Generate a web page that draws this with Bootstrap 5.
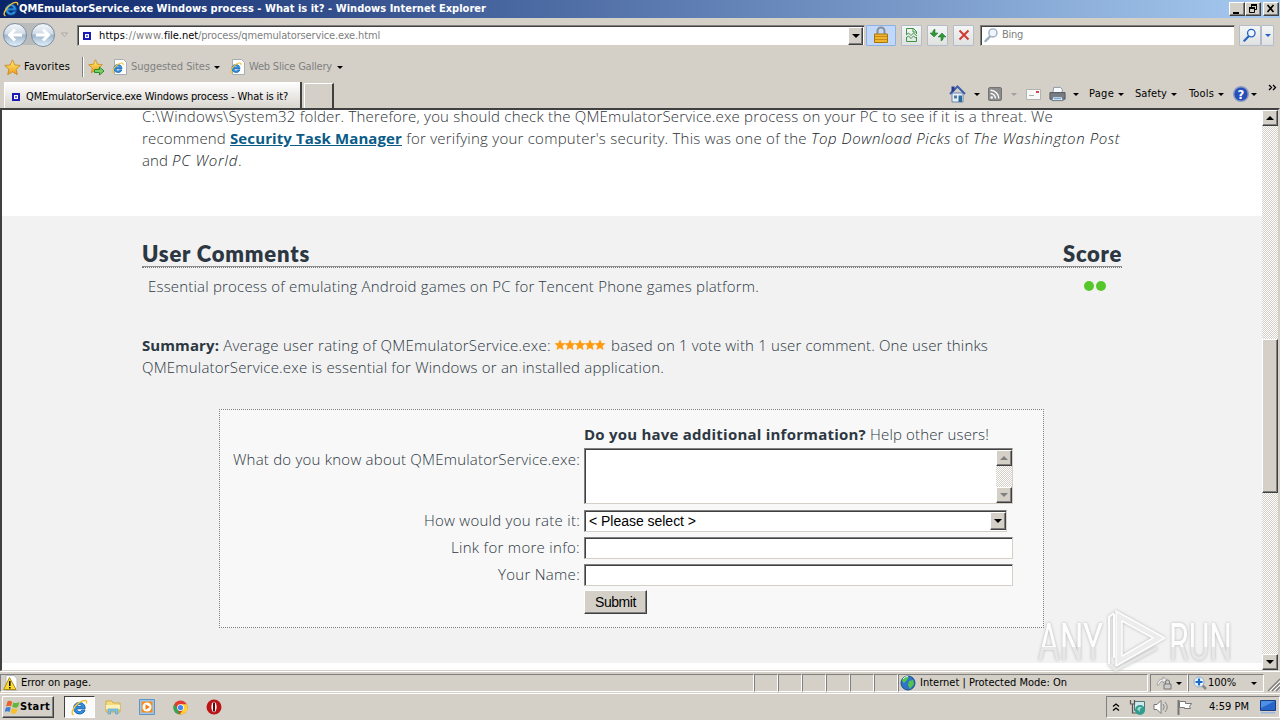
<!DOCTYPE html>
<html lang="en">

<head>
  <meta charset="UTF-8" />
  <meta name="viewport" content="width=device-width, initial-scale=1.0" />
  <title>QMEmulatorService.exe Windows process - What is it?</title>
  <link href="https://cdn.jsdelivr.net/npm/bootstrap@5.3.0/dist/css/bootstrap.min.css" rel="stylesheet" />
  <script src="https://cdn.jsdelivr.net/npm/bootstrap@5.3.0/dist/js/bootstrap.bundle.min.js"></script>
  <style>
    body {
      width: 1280px;
      height: 720px;
      overflow: hidden;
      background: #d4d0c8;
      color: #000;
      font: 11px/14px "DejaVu Sans Condensed", "Noto Sans", sans-serif;
    }

    svg {
      display: block;
      flex: none;
    }

    [data-w] {
      display: inline-block;
      white-space: pre;
      flex: none;
    }

    .dim { color: #808080; }

    /* small black menu arrow */
    .arr {
      flex: none;
      border: 3px solid transparent;
      border-top-color: #000;
      border-bottom: 0;
      width: 0;
      height: 0;
    }

    .arr.off { border-top-color: #a0a0a0; }
    .arr.up { transform: rotate(180deg); }
    .arr.big { border-width: 4px 4px 0; }

    .raised {
      background: #d4d0c8;
      border: 1px solid;
      border-color: #fff #404040 #404040 #fff;
      box-shadow: inset -1px -1px #808080;
    }

    .sunken {
      background: #fff;
      border: 1px solid;
      border-color: #808080 #d4d0c8 #d4d0c8 #808080;
      box-shadow: inset 1px 1px #404040;
    }

    /* title bar */
    .titlebar {
      height: 18px;
      background: linear-gradient(90deg, #0a246a, #a6caf0);
      color: #fff;
      font-weight: bold;
      padding: 0 1px 0 3px;
    }

    .winbtn {
      width: 16px;
      height: 14px;
    }

    /* address row */
    .addressrow {
      height: 33px;
      padding: 1px 0 0 2px;
    }

    .urlbox {
      width: 788px;
      height: 21px;
      margin-left: 8px;
      padding: 2px 1px 1px 5px;
    }

    .iebtn {
      height: 21px;
      border: 1px solid #b4bccb;
      background: linear-gradient(#f4f5f5, #e0e1e1);
      border-radius: 1px;
    }

    .lockbtn {
      background: #c1d8fb;
      border-color: #8db0e7;
    }

    .searchbox {
      width: 255px;
      height: 21px;
      margin-left: 7px;
      padding-left: 3px;
    }

    .favrow {
      height: 30px;
      padding: 2px 0 0 4px;
    }

    .favrow .split {
      width: 2px;
      height: 20px;
      border-left: 1px solid #808080;
      border-right: 1px solid #fff;
      margin: 0 4px 0 12px;
    }

    .tabrow { height: 27px; }

    .pagetab {
      width: 298px;
      height: 26px;
      margin-left: 4px;
      padding: 3px 0 0 7px;
      background: linear-gradient(#fff, #d8d5ce);
      border-right: 2px solid #404040;
      border-left: 1px solid #fff;
    }

    .newtab {
      width: 30px;
      height: 25px;
      margin-left: 2px;
      border: 1px solid #fff;
      border-right: 2px solid #404040;
      border-bottom: 0;
    }

    .tools { width: 331px; height: 26px; }

    /* page viewport */
    .viewport {
      height: 563px;
      border: 2px solid #404040;
      border-bottom: 1px solid #d4d0c8;
      border-right-color: #d4d0c8;
      box-shadow: 0 1px #fff;
      background: #fff;
    }

    .webpage {
      font: 300 15px/22px "Open Sans", "Noto Sans", sans-serif;
      color: #2c3742;
      overflow: hidden;
    }

    .webpage b { font-weight: 700; }
    .intro { height: 106px; padding-left: 140px; color: #2f3337; overflow: hidden; }
    .intro .lines { margin-top: -5px; }
    .intro i { color: #14181c; }
    .intro a { color: #0a5c87; font-weight: 700; }

    .comments {
      height: 447px;
      background: #f2f2f2;
      padding: 25px 140px 0;
    }

    .heads {
      height: 27px;
      font: 800 22px/26px Lato, sans-serif;
      border-bottom: 1px dotted #777;
      box-shadow: inset 0 -1px #8f8f8f;
    }

    .infobox {
      width: 825px;
      height: 219px;
      margin: 31px 0 0 77px;
      padding-top: 13px;
      border: 1px dotted #808080;
      background: #f8f8f8;
    }

    .frow { display: grid; grid-template-columns: 360px 429px; column-gap: 4px; align-items: start; }
    .frow > :first-child { justify-self: end; }
    .frow.slim { line-height: 20px; }
    .rate { width: 423px; height: 22px; font: 14px/16px "Liberation Sans", sans-serif; color: #000; }
    .submit { width: 63px; height: 24px; font: 14px/16px "Liberation Sans", sans-serif; color: #000; padding: 0; border-radius: 0; }

    .track {
      width: 16px;
      background: repeating-conic-gradient(#d4d0c8 0 25%, #fff 0 50%) 0 0 / 2px 2px;
    }

    .sbtn { width: 16px; height: 16px; }
    .thumb { height: 154px; margin-top: 213px; }

    .watermark {
      position: absolute;
      left: 1031px;
      top: 602px;
      opacity: .85;
      overflow: visible;
      filter: drop-shadow(0 0 1.5px #aaa);
    }

    /* status bar and taskbar */
    .status {
      height: 19px;
      margin-top: 3px;
    }

    .pane {
      height: 18px;
      border: 1px solid;
      border-color: #808080 #fff #fff #808080;
      flex: none;
    }

    .taskbar {
      height: 27px;
      border-top: 1px solid #fff;
      padding: 2px 0 2px 2px;
    }

    .start { width: 52px; height: 22px; font-weight: bold; padding-left: 2px; }
    .active-task { width: 31px; height: 22px; margin-left: 10px; border: 1px solid; border-color: #404040 #fff #fff #404040; background: #fafafa; }
    .tray { width: 174px; height: 22px; border: 1px solid; border-color: #808080 #fff #fff #808080; }
  </style>
</head>

<body>
  <svg width="0" height="0" class="position-absolute">
    <defs>
      <linearGradient id="orb" x2="0" y2="1">
        <stop offset="0" stop-color="#f6f9fc" />
        <stop offset=".45" stop-color="#cfdae6" />
        <stop offset=".5" stop-color="#9fb5cc" />
        <stop offset="1" stop-color="#e2f2fb" />
      </linearGradient>
      <linearGradient id="gold" x2="0" y2="1">
        <stop offset="0" stop-color="#fff27a" />
        <stop offset="1" stop-color="#f09a16" />
      </linearGradient>
      <linearGradient id="wm" x2="0" y2="1">
        <stop offset=".58" stop-color="#fff" />
        <stop offset=".58" stop-color="#e6e6e6" />
      </linearGradient>
      <symbol id="ie" viewBox="0 0 16 16">
        <path d="M13.300 9.200H5.400c.2 3 3.700 3.600 4.800 1.300h3C11.500 16 2.500 15 2.500 8.600 2.500 1.500 13.700 1.300 13.300 9.200zM5.500 7.200h4.700C10 4.600 5.900 4.600 5.500 7.200z" fill="#2f92df" stroke="#1560ad" stroke-width=".9" />
        <path d="M2.600 14.600C-.5 15 1.300 8 7.300 3.700 11.500.7 15.900.3 14.500 4.300" fill="none" stroke="#f0c33a" stroke-width="1.400" />
      </symbol>
      <symbol id="iepage" viewBox="0 0 16 16">
        <path d="M2.500.5h9l3 3v12h-12z" fill="#fff" stroke="#a8adb5" />
        <use href="#ie" x="0" y="3" width="12" height="12" />
      </symbol>
      <symbol id="star" viewBox="0 0 16 16">
        <path d="M8 .8l2.100 4.800 5.200.5-3.900 3.500 1.100 5.100L8 12.100l-4.500 2.600 1.100-5.100L.7 6.100l5.200-.5z" fill="url(#gold)" stroke="#c8841a" stroke-width=".8" />
      </symbol>
      <symbol id="sq" viewBox="0 0 8 8">
        <path d="M0 0h8v8H0z" fill="#1a1ab4" />
        <path d="M2 2h4v4H2z" fill="#fff" />
        <path d="M3 3h2v2H3z" fill="#6b6be0" />
      </symbol>
      <symbol id="lens" viewBox="0 0 16 16">
        <path d="M6.500 9.500L1.500 14.500" stroke="currentColor" stroke-width="2.400" stroke-linecap="round" />
        <circle cx="9.500" cy="5.800" r="4.300" fill="#eef5fd" stroke="currentColor" stroke-width="1.500" />
      </symbol>
    </defs>
  </svg>

  <div class="titlebar d-flex align-items-center">
    <svg width="16" height="16"><use href="#ie" /></svg>
    <span data-w="467">QMEmulatorService.exe Windows process - What is it? - Windows Internet Explorer</span>
    <div class="d-flex ms-auto">
      <div class="winbtn raised"><svg width="14" height="12"><path d="M3 9h6v2H3z" /></svg></div>
      <div class="winbtn raised"><svg width="14" height="12"><path d="M5 1h6v2H5zM3 4h6v2H3z" /><path d="M5.500 4V1.500h5v5H9M3.500 5h5v4.500h-5z" fill="none" stroke="#000" /></svg></div>
      <div class="winbtn raised" style="margin-left:2px"><svg width="14" height="12"><path d="M3.500 2l6 7M9.500 2l-6 7" stroke="#000" stroke-width="1.700" /></svg></div>
    </div>
  </div>

  <div class="addressrow d-flex align-items-center">
    <svg width="54" height="28" viewBox="0 0 54 28">
      <rect x="1" y="2" width="52" height="22" rx="11" fill="#a9adb3" opacity=".6" />
      <circle cx="13" cy="14" r="11.500" fill="url(#orb)" stroke="#7c8da0" />
      <circle cx="41" cy="14" r="11.500" fill="url(#orb)" stroke="#7c8da0" />
      <path d="M20 14H8M13 8.500L7.500 14l5.500 5.500M34 14h12M41 8.500l5.500 5.500-5.500 5.500" fill="none" stroke="#fff" stroke-width="3" />
    </svg>
    <svg class="ms-1" width="9" height="6"><path d="M1.500 1h6L4.500 4.500z" fill="#dedbd5" stroke="#aaa69f" /></svg>
    <div class="urlbox sunken d-flex align-items-center">
      <svg width="8" height="8"><use href="#sq" /></svg>
      <span class="dim ps-2 d-flex"><span class="text-black" data-w="26">https</span><span data-w="39">://www.</span><span class="text-black" data-w="34">file.net</span><span data-w="182">/process/qmemulatorservice.exe.html</span></span>
      <div class="raised ms-auto d-flex align-items-center justify-content-center" style="width:15px;height:18px"><span class="arr big"></span></div>
    </div>
    <div class="iebtn lockbtn d-flex align-items-center justify-content-center" style="width:30px;margin-left:1px">
      <svg width="16" height="18" viewBox="0 0 16 18">
        <path d="M4.500 8V5a3.500 3.500 0 0 1 7 0v3" fill="none" stroke="#8a8d92" stroke-width="2" />
        <path d="M1.500 8h13v8.500h-13z" fill="#f0b52c" stroke="#a87412" />
        <path d="M2 10.500h12M2 13.500h12" stroke="#c28a18" />
      </svg>
    </div>
    <div class="iebtn d-flex align-items-center justify-content-center" style="width:21px;margin-left:5px">
      <svg width="14" height="16" viewBox="0 0 14 16"><path d="M1.500 7V1.500h7l3 3V7M1.500 10v4.500h10V10M8 1.500V5h3.500M1 8l2.500-2L6 8.500 8.500 6 12 9M1 11l2.500-2L6 11.500 8.500 9l3.500 3" fill="none" stroke="#3b9542" /></svg>
    </div>
    <div class="iebtn d-flex align-items-center justify-content-center" style="width:21px;margin-left:5px">
      <svg width="16" height="14" viewBox="0 0 16 14"><path d="M5 1v4h3L4 9 0 5h2.500Q2.500 2 5 1zM11 13V9H8l4-4 4 4h-2.500q0 3-2.500 4z" fill="#2e9937" stroke="#1c7024" stroke-width=".5" /></svg>
    </div>
    <div class="iebtn d-flex align-items-center justify-content-center" style="width:21px;margin-left:5px">
      <svg width="12" height="12"><path d="M1.500 1.500l9 9M10.500 1.500l-9 9" stroke="#d03b34" stroke-width="2" /></svg>
    </div>
    <div class="searchbox sunken d-flex align-items-center" style="margin-left:6px">
      <svg width="15" height="16" style="color:#9aaec2"><use href="#lens" /></svg>
      <span class="dim" style="margin-left:3px" data-w="21">Bing</span>
    </div>
    <div class="iebtn d-flex align-items-center justify-content-center" style="width:22px;margin-left:4px;color:#2462c5">
      <svg width="14" height="14"><use href="#lens" /></svg>
    </div>
    <div class="iebtn d-flex align-items-center justify-content-center" style="width:13px"><span class="arr" style="border-top-color:#2462c5"></span></div>
  </div>

  <div class="favrow d-flex align-items-center">
    <svg width="17" height="17"><use href="#star" /></svg>
    <span style="margin-left:3px" data-w="46">Favorites</span>
    <span class="split"></span>
    <svg width="17" height="17" viewBox="0 0 17 17"><use href="#star" width="15" height="15" /><path d="M6.500 10.500h5V8l4.500 4-4.500 4v-2.500h-5z" fill="#7ad064" stroke="#268b2a" /></svg>
    <svg width="16" height="16" style="margin-left:7px"><use href="#iepage" /></svg>
    <span class="dim" style="margin-left:3px" data-w="79">Suggested Sites</span>
    <span class="arr" style="margin-left:4px"></span>
    <svg width="16" height="16" style="margin-left:10px"><use href="#iepage" /></svg>
    <span class="dim" style="margin-left:3px" data-w="83">Web Slice Gallery</span>
    <span class="arr" style="margin-left:5px"></span>
  </div>

  <div class="tabrow d-flex align-items-end">
    <div class="pagetab d-flex align-items-center">
      <svg width="8" height="8"><use href="#sq" /></svg>
      <span style="margin-left:6px" data-w="262">QMEmulatorService.exe Windows process - What is it?</span>
    </div>
    <div class="newtab"></div>
    <div class="tools d-flex align-items-center ms-auto align-self-start">
      <svg width="17" height="18" viewBox="0 0 17 18"><path d="M3 8h11v9H3z" fill="#e9f0fb" stroke="#6d83a9" /><path d="M1 9l7.500-7.500L16 9" fill="none" stroke="#3d60ad" stroke-width="2" /><path d="M2.500 1.500h3v4l-3 2z" fill="#273a8d" /><path d="M9.500 10.500h3.500V17H9.500z" fill="#286f9c" /><path d="M5 10.500h3v3H5z" fill="#53799f" /></svg>
      <span class="arr" style="margin-left:8px"></span>
      <svg style="margin-left:8px" width="14" height="14"><rect x=".5" y=".5" width="13" height="13" rx="1.500" fill="#8d8d8d" stroke="#747474" /><circle cx="3.700" cy="10.500" r="1.300" fill="#fff" /><path d="M2.500 6.500a5 5 0 0 1 5 5M2.500 3.200a8.300 8.300 0 0 1 8.300 8.300" fill="none" stroke="#fff" stroke-width="1.400" /></svg>
      <span class="arr off" style="margin-left:9px"></span>
      <svg style="margin-left:9px" width="15" height="11"><path d="M.5.500h14v10H.5z" fill="#f9f9f9" stroke="#b2b2b2" /><path d="M10 2h3v2h-3z" fill="#d24452" /><path d="M3 6.500h5" stroke="#aaa" /></svg>
      <svg style="margin-left:8px" width="17" height="16" viewBox="0 0 18 16"><path d="M5 1h7l2 2v4H4z" fill="#f8fbff" stroke="#8794a4" /><path d="M1 6.500h16v7H1z" fill="#777c83" stroke="#50555b" /><path d="M4 11h10l1 4H3z" fill="#eef4fb" stroke="#65717f" /><path d="M5 13h8" stroke="#4d8fd1" /></svg>
      <span class="arr" style="margin-left:7px"></span>
      <span style="margin-left:10px" data-w="25">Page</span><span class="arr" style="margin-left:4px"></span>
      <span style="margin-left:11px" data-w="32">Safety</span><span class="arr" style="margin-left:4px"></span>
      <span style="margin-left:12px" data-w="25">Tools</span><span class="arr" style="margin-left:4px"></span>
      <svg style="margin-left:9px" width="16" height="16"><circle cx="8" cy="8" r="7.300" fill="#2650b8" stroke="#8a9ac0" stroke-width="1.400" /><text x="8" y="12.500" text-anchor="middle" font-size="13" font-weight="bold" fill="#fff">?</text></svg>
      <span class="arr" style="margin-left:2px"></span>
      <svg class="align-self-start" style="margin-left:11px" width="9" height="12"><path d="M1 4l2.500 2.500L1 9M5 4l2.500 2.500L5 9" fill="none" stroke="#000" stroke-width="1.300" /></svg>
    </div>
  </div>

  <div class="viewport d-flex">
    <div class="webpage flex-grow-1">
      <div class="intro">
        <div class="lines">
          <div><span data-w="911">C:\Windows\System32 folder. Therefore, you should check the QMEmulatorService.exe process on your PC to see if it is a threat. We</span></div>
          <div class="d-flex"><span data-w="88">recommend </span><a href="#" data-w="172">Security Task Manager</a><span data-w="409"> for verifying your computer's security. This was one of the </span><i data-w="140">Top Download Picks</i><span data-w="22"> of </span><i data-w="147">The Washington Post</i></div>
          <div class="d-flex"><span data-w="30">and </span><i data-w="66">PC World</i><span>.</span></div>
        </div>
      </div>
      <div class="comments">
        <div class="heads d-flex justify-content-between"><span data-w="168">User Comments</span><span data-w="59">Score</span></div>
        <div class="d-flex align-items-center" style="padding:7px 16px 0 6px">
          <span data-w="611">Essential process of emulating Android games on PC for Tencent Phone games platform.</span>
          <svg class="ms-auto" width="22" height="10"><circle cx="5" cy="5" r="5" fill="#56c72b" /><circle cx="17" cy="5" r="5" fill="#56c72b" /></svg>
        </div>
        <div style="padding-top:37px">
          <div class="d-flex align-items-center"><b data-w="77">Summary:</b><span data-w="336"> Average user rating of QMEmulatorService.exe: </span><svg width="50" height="10" id="stars"></svg><span style="margin-left:2px" data-w="381"> based on 1 vote with 1 user comment. One user thinks</span></div>
          <div><span data-w="522">QMEmulatorService.exe is essential for Windows or an installed application.</span></div>
        </div>
        <div class="infobox">
          <div class="frow"><span></span><div class="d-flex"><b data-w="282">Do you have additional information?</b><span data-w="123"> Help other users!</span></div></div>
          <div class="frow" style="margin-top:3px">
            <span data-w="347">What do you know about QMEmulatorService.exe:</span>
            <div class="sunken d-flex" style="height:56px">
              <div class="track ms-auto d-flex flex-column justify-content-between" style="margin-top:1px">
                <div class="sbtn raised d-flex align-items-center justify-content-center"><span class="arr big up" style="border-top-color:#808080"></span></div>
                <div class="sbtn raised d-flex align-items-center justify-content-center"><span class="arr big" style="border-top-color:#808080"></span></div>
              </div>
            </div>
          </div>
          <div class="frow slim" style="margin-top:6px">
            <span data-w="156">How would you rate it:</span>
            <div class="rate sunken d-flex align-items-center ps-1"><span data-w="107">&lt; Please select &gt;</span><div class="raised ms-auto d-flex align-items-center justify-content-center" style="width:16px;height:18px"><span class="arr big"></span></div></div>
          </div>
          <div class="frow slim" style="margin-top:5px"><span data-w="129">Link for more info:</span><div class="sunken" style="height:22px"></div></div>
          <div class="frow slim" style="margin-top:5px"><span data-w="82">Your Name:</span><div class="sunken" style="height:22px"></div></div>
          <div class="frow" style="margin-top:4px"><span></span><button class="submit raised"><span data-w="41">Submit</span></button></div>
        </div>
      </div>
    </div>
    <div class="track d-flex flex-column">
      <div class="sbtn raised d-flex align-items-center justify-content-center"><span class="arr big up"></span></div>
      <div class="thumb raised"></div>
      <div class="sbtn raised d-flex align-items-center justify-content-center mt-auto"><span class="arr big"></span></div>
    </div>
  </div>

  <div class="status d-flex">
    <div class="pane d-flex align-items-center" style="width:754px;padding-left:2px">
      <svg width="15" height="16" viewBox="0 0 15 16"><path d="M3 .5h8l3 3v12H3z" fill="#fff" stroke="#bbb" /><path d="M6.500 2.500L13 14.500H.7z" fill="#fbdc2c" stroke="#ab8a14" stroke-linejoin="round" /><path d="M6.800 6v5M6.800 12v1.500" stroke="#000" stroke-width="1.500" /></svg>
      <span style="margin-left:3px" data-w="70">Error on page.</span>
    </div>
    <div class="d-flex" id="panes"></div>
    <div class="pane d-flex align-items-center" style="width:250px;padding-left:1px">
      <svg width="16" height="16"><circle cx="8" cy="8" r="7" fill="#2c75c7" stroke="#1e4a8a" /><path d="M3 3q4-3 6-1L7 5 4 8 2 6zM9 6l4-1 1 4-4 5-2-4z" fill="#55c34c" /><path d="M3 4q2-3 5-2.500" fill="none" stroke="#d9f5ff" /></svg>
      <span style="margin-left:4px" data-w="147">Internet | Protected Mode: On</span>
    </div>
    <div class="pane d-flex align-items-center" style="width:38px;padding-left:5px;margin-left:2px">
      <svg width="16" height="14" viewBox="0 0 16 14"><path d="M1 9Q2 3 7 3V1l4 3-4 3V5Q4 5 3 9z" fill="#eee" stroke="#999" stroke-width=".8" /><path d="M9.500 8V6a2 2 0 0 1 4 0v2M8 8h7v5H8z" fill="#ccc" stroke="#777" /></svg>
      <span class="arr" style="margin-left:4px"></span>
    </div>
    <div class="pane d-flex align-items-center" style="width:76px;padding-left:4px">
      <svg width="15" height="15"><path d="M9 9l4 4" stroke="#888" stroke-width="2.500" /><circle cx="6" cy="6" r="5" fill="#eef6ff" stroke="#91aecb" /><path d="M6 2.500v7M2.500 6h7" stroke="#1c6bc7" stroke-width="2.200" /></svg>
      <span data-w="28">100%</span>
      <span class="arr" style="margin-left:15px"></span>
    </div>
    <svg class="ms-auto" width="12" height="18"><path d="M0 17L12 5M4 17l8-8M8 17l4-4" stroke="#808080" stroke-width="1.500" /><path d="M2 17L12 7M6 17l6-6" stroke="#fff" /></svg>
  </div>

  <div class="taskbar d-flex align-items-center">
    <div class="start raised d-flex align-items-center">
      <svg width="15" height="16" viewBox="0 0 15 16"><path d="M2.500 2.500Q5 1 7.200 3L6 7.500Q4 6 1 7.500z" fill="#e9612b" /><path d="M8.300 3.400Q11 5 14.500 3L13 8Q10 9.500 7.200 7.800z" fill="#65b53b" /><path d="M.8 8.800Q4 7.300 5.700 8.800L4.500 13Q2.500 11.500-.3 13z" fill="#3e7dda" /><path d="M6.900 9.100Q9.500 11 12.600 9.300L11.300 14Q8 15.500 5.600 13.400z" fill="#f7c028" /></svg>
      <span data-w="30">Start</span>
    </div>
    <div class="active-task d-flex align-items-center justify-content-center"><svg width="17" height="17"><use href="#ie" /></svg></div>
    <svg style="margin-left:9px" width="18" height="18" viewBox="0 0 18 18"><path d="M2 3h6l1 2h7v9H2z" fill="#f4dc82" stroke="#d3ac45" /><path d="M2 7h14v4H2z" fill="#fbf0b7" /><path d="M4 16v-5h10v5h-2.500v-3h-5v3z" fill="#7ec5e8" stroke="#5fa1c8" stroke-width=".7" /></svg>
    <svg style="margin-left:17px" width="16" height="16"><path d="M.5.500h15v15H.5z" fill="#9fc5e8" stroke="#5e94c8" /><path d="M2.500 2.500h11v11h-11z" fill="#f48c1f" /><circle cx="8" cy="8" r="4.500" fill="#fff" /><path d="M6.500 5.300v5.400L10.800 8z" fill="#ef7d12" /></svg>
    <svg style="margin-left:18px" width="15" height="15" viewBox="0 0 16 16"><circle cx="8" cy="8" r="7.500" fill="#e33b2e" /><path d="M1.500 4.300L6 12l1 3.500A7.500 7.500 0 0 1 1.500 4.300z" fill="#2da94f" /><path d="M8 4.500h6.700Q17.500 11 12 14.300q-2 1.200-5 1.100L11 10z" fill="#fdd232" /><circle cx="8" cy="8" r="3.600" fill="#fff" /><circle cx="8" cy="8" r="2.800" fill="#4086f4" /></svg>
    <svg style="margin-left:18px" width="16" height="16"><circle cx="8" cy="8" r="7.500" fill="#ba1419" /><ellipse cx="8" cy="8" rx="2.600" ry="5.300" fill="#fff" /><path d="M8 3.500v9" stroke="#5d090c" stroke-width="2" /></svg>
    <div class="tray d-flex align-items-center ms-auto">
      <svg style="margin-left:5px" width="8" height="10"><path d="M1 4.500L4 2l3 2.500M1 8.500L4 6l3 2.500" fill="none" stroke="#000" stroke-width="1.300" /></svg>
      <svg style="margin-left:9px" width="17" height="17"><path d="M5.500 2.500h10v9h-10z" fill="#cfe9ef" stroke="#577" /><path d="M1.500 1v4h4V1M3.500 5v9H8" fill="none" stroke="#555" stroke-width="1.200" /><circle cx="11" cy="11" r="5" fill="#329c90" /><path d="M8 10q3-4 5-1-3 0-2 4" fill="#9ce0c5" /></svg>
      <svg style="margin-left:7px" width="17" height="16"><path d="M1 5.500h3L8 1.500v13l-4-4H1z" fill="#fff" stroke="#777" /><path d="M10 5q2.500 3 0 6M12 3q4.500 5 0 10" fill="none" stroke="#888" /></svg>
      <svg style="margin-left:7px" width="16" height="17"><path d="M1.500 1v15" stroke="#777" stroke-width="2" /><path d="M2.500 2.500h6v2h6l-2 3 1 2h-6v-1h-5z" fill="#fff" stroke="#777" /></svg>
      <span style="margin-left:16px" data-w="40">4:59 PM</span>
      <svg style="margin-left:11px" width="16" height="14"><path d="M.5.500h15v10H.5z" fill="#2867c9" stroke="#1a3c80" /><path d="M1 1h14L1 8z" fill="#4d90e6" /><path d="M1 12h14v1.500H1z" fill="#9bb9de" /></svg>
    </div>
  </div>

  <svg class="watermark" width="210" height="74" viewBox="0 0 210 74">
    <g font-family="Roboto, sans-serif" font-size="52" fill="url(#wm)">
      <text x="7" y="58" textLength="65" lengthAdjust="spacingAndGlyphs">ANY</text>
      <text x="138" y="58" textLength="63" lengthAdjust="spacingAndGlyphs">RUN</text>
    </g>
    <path d="M78 62V15l5-4M83 12v44" fill="none" stroke="#fff" stroke-width="2" />
    <path d="M85 9v55l49-28zM91 19v35l31-18z" fill="#ececec" fill-rule="evenodd" stroke="#fff" stroke-width="1.500" stroke-linejoin="round" />
    <path d="M78 62l7 6 41-22" fill="none" stroke="#e6e6e6" stroke-width="3" />
  </svg>

  <script>
    // five rating stars
    let stars = "";
    for (let i = 0; i < 5; i++) {
      stars += `<path transform="translate(${i * 10})" d="M5 0l1.400 3.300 3.600.3-2.700 2.400.8 3.500L5 7.700 1.900 9.500l.8-3.500L0 3.600l3.600-.3z" fill="#ff9a0c" stroke="#ff9a0c" stroke-width=".5"/>`;
    }
    document.getElementById("stars").innerHTML = stars;

    // empty status panes
    const panes = document.getElementById("panes");
    [24, 24, 24, 24, 24, 24].forEach((w) => {
      panes.innerHTML += `<div class="pane" style="width:${w}px"></div>`;
    });

    // tracks each text run to the width given in data-w
    document.querySelectorAll("[data-w]").forEach((el) => {
      const want = Number(el.dataset.w);
      const have = el.getBoundingClientRect().width;
      el.style.letterSpacing = (want - have) / el.textContent.length + "px";
    });
  </script>
</body>

</html>
